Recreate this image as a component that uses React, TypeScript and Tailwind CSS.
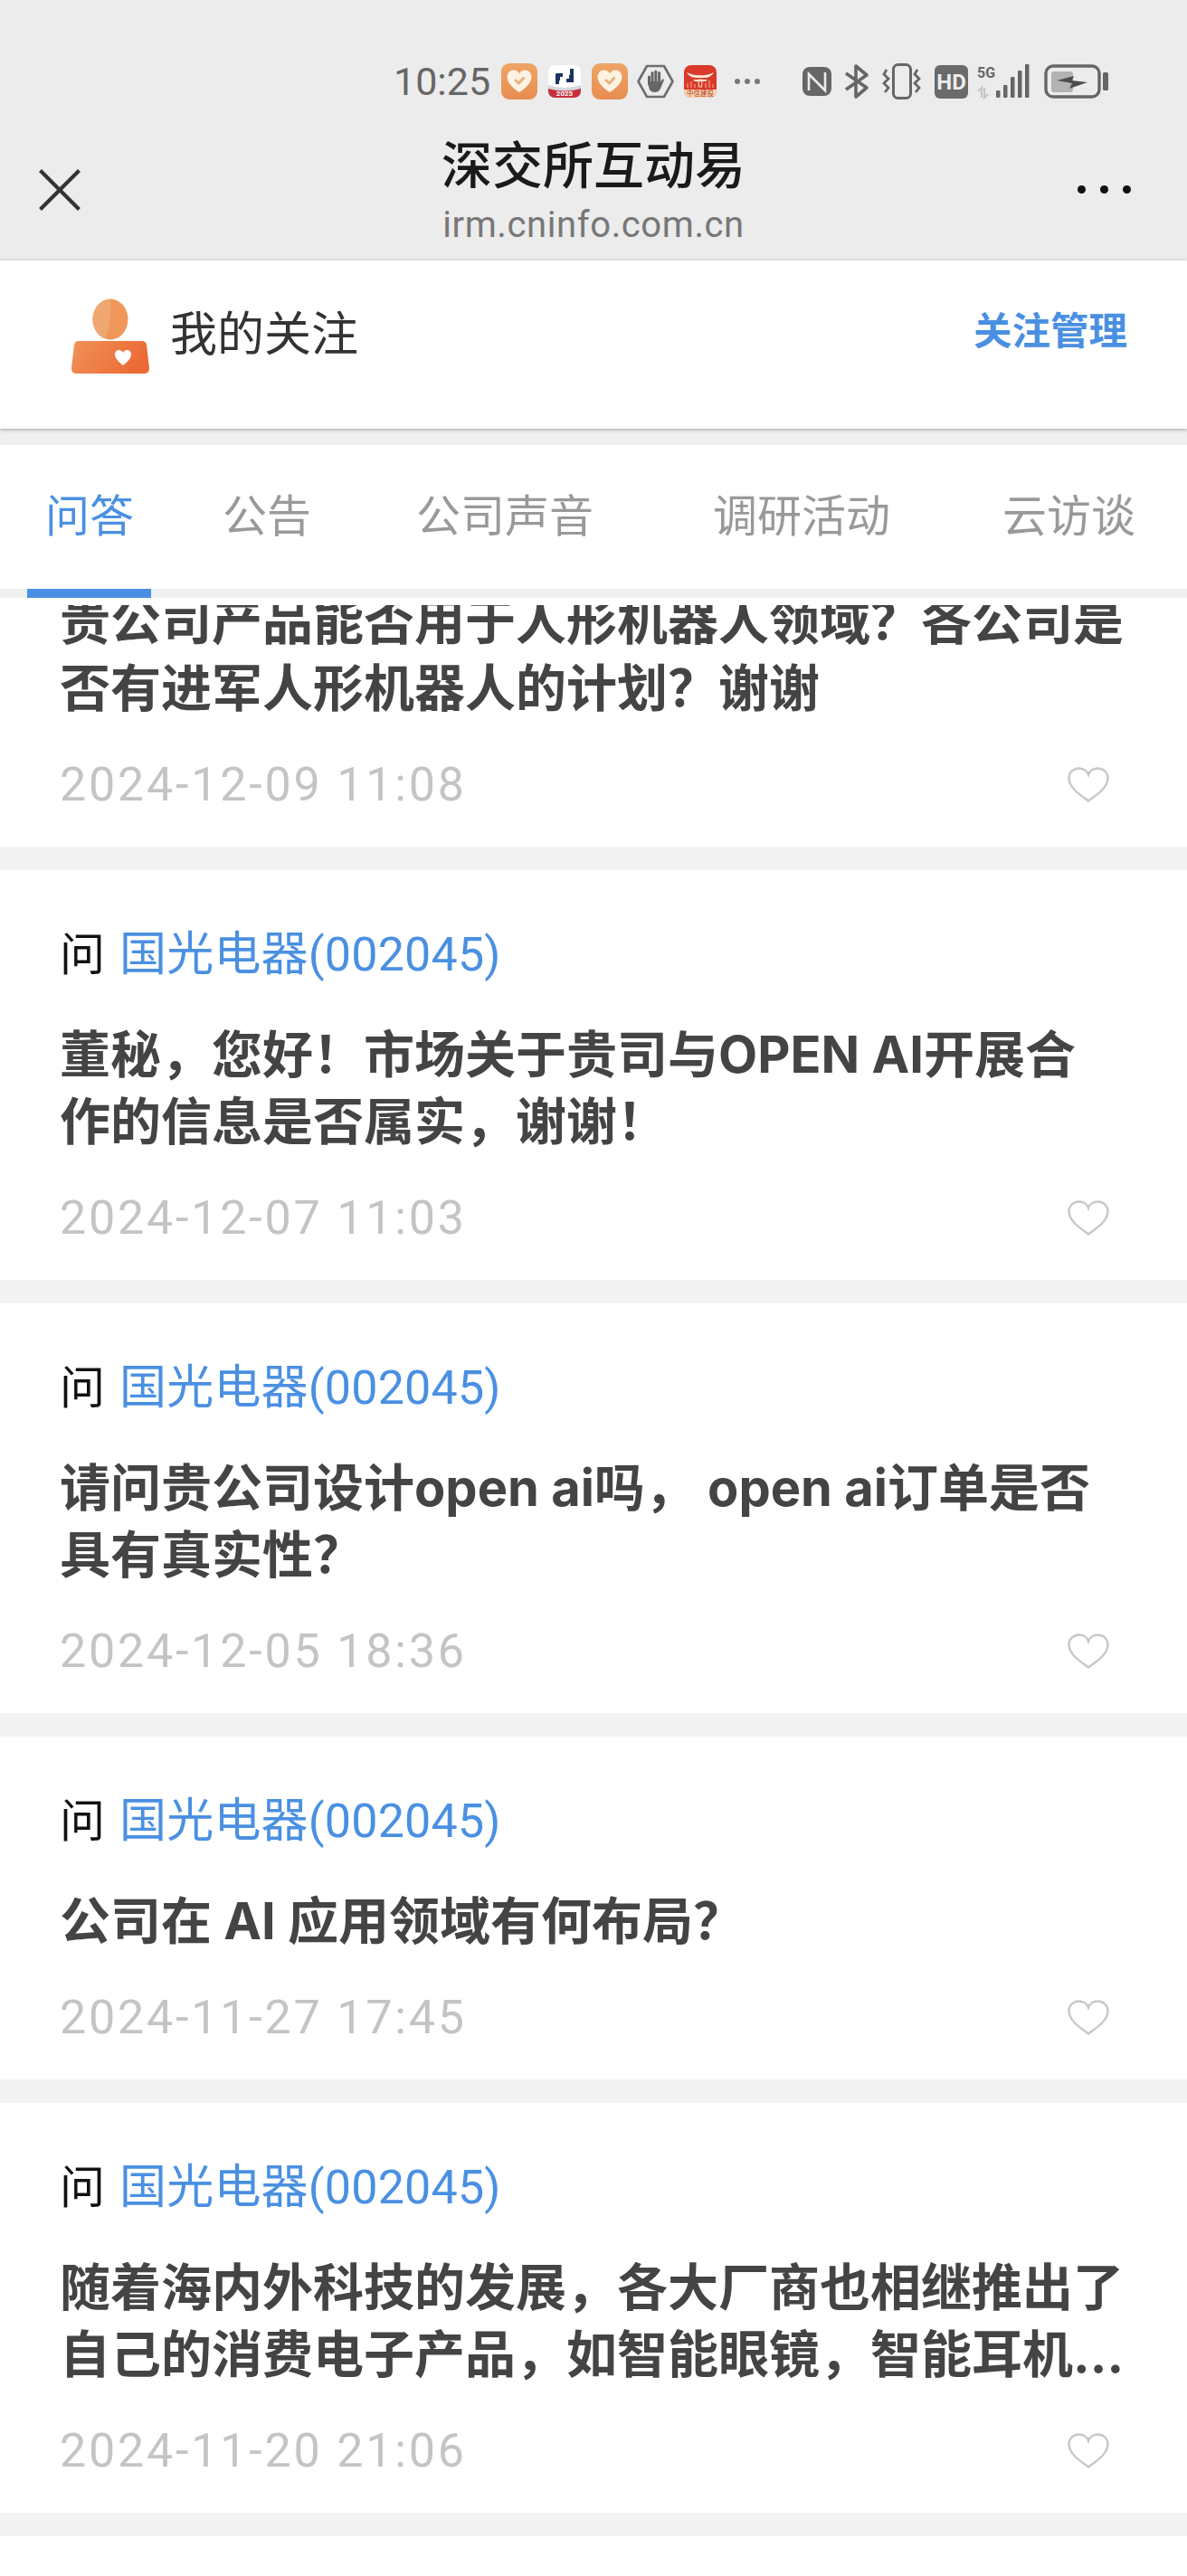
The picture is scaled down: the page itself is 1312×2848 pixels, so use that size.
import React from "react";

const cjk = "font-['Roboto','Noto_Sans_CJK_SC',sans-serif]";
const titleFont = "font-['Inter','Noto_Sans_CJK_SC',sans-serif]";

function HeartBadge({ className }: { className?: string }) {
  return (
    <svg width="40" height="40" viewBox="0 0 40 40" className={className}>
      <defs>
        <linearGradient id="bdg" x1="0" y1="0" x2="0" y2="1">
          <stop offset="0" stopColor="#eea566" />
          <stop offset="1" stopColor="#e88d52" />
        </linearGradient>
      </defs>
      <rect width="40" height="40" rx="9" fill="url(#bdg)" />
      <path d="M20 32 C14 28 6.5 22 6.5 15 C6.5 10.5 10 7.5 13.5 7.5 C16.5 7.5 19 9 20 11.5 C21 9 23.5 7.5 26.5 7.5 C30 7.5 33.5 10.5 33.5 15 C33.5 22 26 28 20 32Z" fill="#fdf3e3" />
      <path d="M15 18 L19.5 22 L25.5 15.5" fill="none" stroke="#eab27c" strokeWidth="3" />
    </svg>
  );
}

function PdIcon({ className }: { className?: string }) {
  return (
    <svg width="36" height="36" viewBox="0 0 36 36" className={className}>
      <rect width="36" height="36" rx="7" fill="#fff" />
      <path d="M0 25 H36 V29 A7 7 0 0 1 29 36 H7 A7 7 0 0 1 0 29Z" fill="#c4303c" />
      <path d="M0 22 Q18 28 36 22 V26 Q18 31 0 26Z" fill="#d7d7de" />
      <path d="M9 9 H16 V13 H13 V17 H12 V21 H8 V10Z M20 19 V15 H23 V11 H24 V4 H28 V19Z" fill="#1e3264" />
      <text x="18" y="34" textAnchor="middle" fontSize="8" fontWeight="700" fill="#fff" fontFamily="Roboto, sans-serif">2025</text>
    </svg>
  );
}

function HandIcon({ className }: { className?: string }) {
  return (
    <svg width="41" height="38" viewBox="0 0 41 38" className={className}>
      <path d="M11 2 H30 L39.5 19 L30 36 H11 L1.5 19Z" fill="none" stroke="#6e6e6e" strokeWidth="2.6" strokeLinejoin="round" />
      <path d="M13.5 14 V22 M17 9.5 V20 M20.8 8 V20 M24.6 9.5 V20" stroke="#666" strokeWidth="3" strokeLinecap="round" />
      <path d="M12 19 H26 L29 16 L30 17.5 L26 27 Q24 31 20 31 Q15 31 13.5 27Z" fill="#666" />
    </svg>
  );
}

function RedApp({ className }: { className?: string }) {
  return (
    <svg width="36" height="36" viewBox="0 0 36 36" className={className}>
      <rect width="36" height="36" rx="8" fill="#d93a2b" />
      <path d="M0 27 H36 V28 A8 8 0 0 1 28 36 H8 A8 8 0 0 1 0 28Z" fill="#f9d6b4" />
      <path d="M3 8 Q12 12 18 11 Q24 12 33 8 Q30 14 22 14 H14 Q6 14 3 8Z" fill="#fbe9d8" />
      <path d="M10 16 H26 L24 18 H12Z" fill="#fbe9d8" />
      <path d="M16 16 H20 L19.5 24 H16.5Z" fill="none" stroke="#fbd4b0" strokeWidth="1.2" />
      <path d="M4 25 V20 M8 25 V18 M12 25 V21 M24 25 V20 M28 25 V17 M32 25 V21" stroke="#ee8a6a" strokeWidth="1.6" />
      <text x="18" y="34" textAnchor="middle" fontSize="7.5" fill="#b03a24" fontFamily="'Noto Sans CJK SC', sans-serif">中信建投</text>
    </svg>
  );
}

function StatusBar() {
  return (
    <div className="flex items-center h-[60px] pl-[435px]">
      <span className="w-[103px] text-[43px] leading-[60px] text-[#666] font-['Roboto',sans-serif] whitespace-nowrap">10:25</span>
      <HeartBadge className="ml-[16px]" />
      <PdIcon className="ml-[12px]" />
      <HeartBadge className="ml-[12px]" />
      <HandIcon className="ml-[10px]" />
      <RedApp className="ml-[11px]" />
      <svg width="30" height="8" viewBox="0 0 30 8" className="ml-[19px]">
        <circle cx="4" cy="4" r="3" fill="#777" /><circle cx="15" cy="4" r="3" fill="#777" /><circle cx="26" cy="4" r="3" fill="#777" />
      </svg>
      <svg width="34" height="34" viewBox="0 0 34 34" className="ml-[45px]">
        <rect x="1" y="1" width="32" height="32" rx="8" fill="#666" />
        <path d="M8 27 V9 L26 27 V7" fill="none" stroke="#ececec" strokeWidth="2.6" />
      </svg>
      <svg width="28" height="40" viewBox="0 0 28 40" className="ml-[13px]">
        <path d="M2 11 L25 27 L13 37 V3 L25 13 L2 29" fill="none" stroke="#666" strokeWidth="3.6" strokeLinejoin="round" />
      </svg>
      <svg width="44" height="40" viewBox="0 0 44 40" className="ml-[14px]">
        <rect x="12.5" y="1.5" width="19" height="37" rx="5" fill="none" stroke="#666" strokeWidth="3" />
        <path d="M5 7 L2 12 L7 17 L2 22 L7 27 L3 32" fill="none" stroke="#666" strokeWidth="2.8" />
        <path d="M39 7 L36 12 L41 17 L36 22 L41 27 L37 32" fill="none" stroke="#666" strokeWidth="2.8" />
      </svg>
      <svg width="37" height="37" viewBox="0 0 37 37" className="ml-[14px]">
        <rect width="37" height="37" rx="6" fill="#6a6a6a" />
        <text x="18.5" y="27" textAnchor="middle" fontSize="24" fontWeight="700" fill="#ececec" fontFamily="Roboto, sans-serif">HD</text>
      </svg>
      <svg width="60" height="40" viewBox="0 0 60 40" className="ml-[10px]">
        <text x="0" y="16" fontSize="17" fontWeight="700" fill="#666" fontFamily="Roboto, sans-serif" textLength="20" lengthAdjust="spacingAndGlyphs">5G</text>
        <path d="M5 38 V27 L1 31 M8 27 V38 L12 34" fill="none" stroke="#c6c6c6" strokeWidth="2.2" />
        <rect x="21" y="30" width="4.5" height="8" rx="1" fill="#666" />
        <rect x="29" y="24" width="4.5" height="14" rx="1" fill="#666" />
        <rect x="37" y="15" width="4.5" height="23" rx="1" fill="#666" />
        <rect x="45" y="8" width="4.5" height="30" rx="1" fill="#666" />
        <rect x="53" y="1" width="4.5" height="37" rx="1" fill="#666" />
      </svg>
      <svg width="71" height="38" viewBox="0 0 71 38" className="ml-[14px]">
        <rect x="2" y="2" width="59" height="34" rx="8" fill="none" stroke="#666" strokeWidth="3.4" />
        <rect x="8" y="8" width="24" height="23" rx="3" fill="#b3b3b3" />
        <path d="M14 18 L33 13 L31 18 L48 20 L28 27 L31 21Z" fill="#4d4d4d" />
        <rect x="65" y="9" width="6" height="20" rx="1.5" fill="#666" />
      </svg>
    </div>
  );
}

function Header() {
  return (
    <div className="h-[288px] pt-[60px] bg-[#ececec]">
      <StatusBar />
      <div className="grid grid-cols-[1fr_auto_1fr] pt-[34px]">
        <div className="pl-[43px] pt-[33px]">
          <svg width="46" height="46" viewBox="0 0 46 46">
            <path d="M1.5 1.5 L44.5 44.5 M44.5 1.5 L1.5 44.5" stroke="#333" strokeWidth="4.2" />
          </svg>
        </div>
        <div className={`flex flex-col items-center ${cjk}`}>
          <div className="text-[56px] leading-[60px] font-medium text-[#1a1a1a] whitespace-nowrap">深交所互动易</div>
          <div className="mt-[10px] text-[40px] leading-[50px] text-[#777] tracking-[0.6px] whitespace-nowrap">irm.cninfo.com.cn</div>
        </div>
        <div className="flex justify-end gap-[16px] pr-[62px] pt-[51px] h-fit">
          <span className="w-[9px] h-[9px] rounded-full bg-[#111]" />
          <span className="w-[9px] h-[9px] rounded-full bg-[#111]" />
          <span className="w-[9px] h-[9px] rounded-full bg-[#111]" />
        </div>
      </div>
    </div>
  );
}

function FollowBar() {
  return (
    <div className={`relative h-[186px] bg-white shadow-[0_1px_4px_rgba(0,0,0,0.35)] flex items-center pl-[78px] pr-[66px] pb-[20px] ${cjk}`}>
      <svg width="88" height="86" viewBox="0 0 88 86" className="shrink-0 mt-[4px]">
        <defs>
          <linearGradient id="body" x1="0" y1="0" x2="1" y2="0.3">
            <stop offset="0" stopColor="#f0925a" />
            <stop offset="1" stopColor="#ec6a34" />
          </linearGradient>
        </defs>
        <ellipse cx="44" cy="23" rx="19.5" ry="22.5" fill="#f0975a" />
        <path d="M44 1 A19.5 22.5 0 0 0 24.5 23 A19.5 22.5 0 0 0 38 44.5 Q46 24 44 1Z" fill="#f0a873" />
        <path d="M9 47 H79 Q83 47 84 51 L87 77 Q87 83 81 83 H7 Q1 83 1 77 L4 51 Q5 47 9 47Z" fill="url(#body)" />
        <path d="M58 74 C53 70 49 66 49 61.5 C49 58.5 51.5 57 53.5 57 C55.5 57 57.3 58 58 60 C58.7 58 60.5 57 62.5 57 C64.5 57 67 58.5 67 61.5 C67 66 63 70 58 74Z" fill="#fff" />
      </svg>
      <span className="ml-[22px] text-[52px] leading-[60px] text-[#333] whitespace-nowrap">我的关注</span>
      <span className="ml-auto mb-[8px] text-[42.5px] leading-[50px] font-bold text-[#4a90e2] whitespace-nowrap">关注管理</span>
    </div>
  );
}

function Tabs() {
  return (
    <div className={cjk}>
      <div className="h-[18px] bg-[#f0f0f0]" />
      <div className="h-[159px] bg-white flex items-center text-[49px] leading-[60px] text-[#999] whitespace-nowrap">
        <span className="ml-[50px] text-[#4a90e2]">问答</span>
        <span className="ml-[98px]">公告</span>
        <span className="ml-[116px]">公司声音</span>
        <span className="ml-[132px]">调研活动</span>
        <span className="ml-[124px]">云访谈</span>
      </div>
      <div className="h-[10px] bg-[#f0f0f0]">
        <div className="ml-[30px] w-[137px] h-full bg-[#4a90e2]" />
      </div>
    </div>
  );
}

function HeartOutline() {
  return (
    <svg width="46" height="39" viewBox="0 0 46 39" className="mt-[1px]">
      <path d="M23 37.5 C16 32 1.5 24 1.5 12 C1.5 5.5 7 1.5 12.5 1.5 C17 1.5 21.5 4 23 8.5 C24.5 4 29 1.5 33.5 1.5 C39 1.5 44.5 5.5 44.5 12 C44.5 24 30 32 23 37.5Z" fill="none" stroke="#c8c8c8" strokeWidth="2.4" strokeLinejoin="miter" />
    </svg>
  );
}

function DateRow({ date }: { date: string }) {
  return (
    <div className="flex items-center justify-between pr-[86px] mt-[39px] h-[60px]">
      <span className="pt-[2px] text-[52px] leading-[60px] text-[#c4c4c4] font-['Roboto',sans-serif] tracking-[2.8px] whitespace-nowrap">{date}</span>
      <HeartOutline />
    </div>
  );
}

function Card({ lines, date }: { lines: string[]; date: string }) {
  return (
    <div className="bg-white pt-[62px] pb-[39px] pl-[66px]">
      <div className="flex items-center h-[60px] pt-[3px] text-[52px] leading-[60px] whitespace-nowrap">
        <span className="text-[50px] text-[#111] w-[66px]">问</span>
        <span className="text-[#4a90e2] tracking-[0.2px]">国光电器(002045)</span>
      </div>
      <div className={`mt-[45px] text-[56px] leading-[74px] font-bold text-[#444] whitespace-nowrap ${titleFont}`}>
        {lines.map((l) => (
          <div key={l}>{l}</div>
        ))}
      </div>
      <DateRow date={date} />
    </div>
  );
}

function Gap() {
  return <div className="h-[26px] bg-[#f3f3f3]" />;
}

export default function App() {
  return (
    <div className={`w-[1312px] h-[2848px] overflow-hidden bg-white ${cjk}`}>
      <Header />
      <FollowBar />
      <Tabs />
      <div className="bg-white pt-[8px] pb-[39px] pl-[66px]">
        <div className={`h-[129px] overflow-hidden text-[56px] leading-[74px] font-bold text-[#444] whitespace-nowrap ${titleFont}`}>
          <div className="-mt-[19px]">
            <div>贵公司产品能否用于人形机器人领域？各公司是</div>
            <div>否有进军人形机器人的计划？谢谢</div>
          </div>
        </div>
        <DateRow date="2024-12-09 11:08" />
      </div>
      <Gap />
      <Card lines={["董秘，您好！市场关于贵司与OPEN AI开展合", "作的信息是否属实，谢谢！"]} date="2024-12-07 11:03" />
      <Gap />
      <Card lines={["请问贵公司设计open ai吗， open ai订单是否", "具有真实性？"]} date="2024-12-05 18:36" />
      <Gap />
      <Card lines={["公司在 AI 应用领域有何布局？"]} date="2024-11-27 17:45" />
      <Gap />
      <Card lines={["随着海内外科技的发展，各大厂商也相继推出了", "自己的消费电子产品，如智能眼镜，智能耳机..."]} date="2024-11-20 21:06" />
      <Gap />
    </div>
  );
}
